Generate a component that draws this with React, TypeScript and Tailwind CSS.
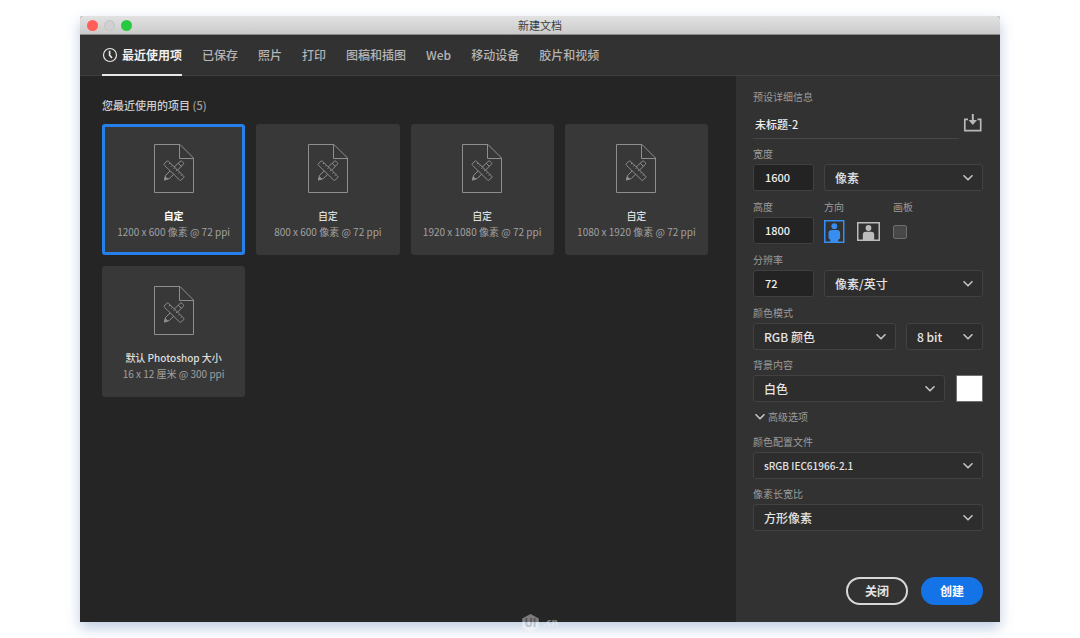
import { useState } from 'react';
import type { ReactNode } from 'react';
import clsx from 'clsx';

const TABS = ['最近使用项', '已保存', '照片', '打印', '图稿和插图', 'Web', '移动设备', '胶片和视频'];

const PRESETS = [
  { id: 1, name: '自定', detail: '1200 x 600 像素 @ 72 ppi' },
  { id: 2, name: '自定', detail: '800 x 600 像素 @ 72 ppi' },
  { id: 3, name: '自定', detail: '1920 x 1080 像素 @ 72 ppi' },
  { id: 4, name: '自定', detail: '1080 x 1920 像素 @ 72 ppi' },
  { id: 5, name: '默认 Photoshop 大小', detail: '16 x 12 厘米 @ 300 ppi' },
];

const ClockIcon = () => (
  <svg width="16" height="16" viewBox="0 0 16 16" fill="none" stroke="#e6e6e6" strokeWidth="1.2">
    <circle cx="8" cy="8" r="6.5" />
    <path d="M7.6 3.8v4.4l2.4 2.8" strokeWidth="1.7" />
  </svg>
);

const DocumentIcon = () => (
  <svg width="40" height="49" viewBox="0 0 40 49" fill="none" stroke="#8e8e8e" strokeWidth="1">
    <path d="M.5.5H26L39.5 14v34.5H.5z" />
    <path d="M25.5.5v14h14" />
    {/* pencil */}
    <path d="M10.4 36l1.3-4.8L26.2 17.4q1-.9 2 0l1 1q1 1 0 2L15.3 34.6z" />
    <path d="M24.3 19.3l3.2 3.2" />
    <path d="M10.4 36l1-3.2 2.2 2.2z" fill="#8e8e8e" />
    {/* ruler */}
    <path d="M10.4 19.6l2.6-2.4q.8-.6 1.6.2L29.6 32q.8.8 0 1.6l-2.4 2.4q-.8.8-1.6 0L10.4 21.2q-.8-.8 0-1.6z" fill="#383838" />
    <path d="M16 19l-1.2 1.2M18.4 21.3l-1.2 1.2M20.8 23.6l-1.2 1.2M23.2 25.9L22 27.1M25.6 28.3l-1.2 1.2M28 30.6l-1.2 1.2" />
  </svg>
);

const Chevron = ({ className }: { className?: string }) => (
  <svg width="10" height="6" viewBox="0 0 10 6" fill="none" stroke="#c4c4c4" strokeWidth="1.6" className={className}>
    <path d="M1 .8l4 4 4-4" strokeLinecap="round" strokeLinejoin="round" />
  </svg>
);

const SaveIcon = () => (
  <svg width="20" height="18" viewBox="0 0 20 18" fill="none" stroke="#b8b8b8" strokeWidth="1.7">
    <path d="M5 5.3H1.8v11.4h15.9V5.3h-3.2" />
    <path d="M9.8 0v8" strokeWidth="2" />
    <path d="M5.6 6H14l-4.2 5z" fill="#b8b8b8" stroke="none" />
  </svg>
);

const PortraitIcon = () => (
  <svg width="21" height="23" viewBox="0 0 21 23">
    <rect x=".75" y=".75" width="19" height="21.5" fill="none" stroke="#378ef0" strokeWidth="1.5" />
    <circle cx="10.3" cy="6.2" r="2.9" fill="#378ef0" />
    <path d="M7.8 10h5q3.3 0 3.3 3.2v4.2q0 1.8-1.8 2V22h-8v-2.6q-1.8-.2-1.8-2v-4.2Q4.5 10 7.8 10z" fill="#378ef0" />
  </svg>
);

const LandscapeIcon = () => (
  <svg width="23" height="19" viewBox="0 0 23 19">
    <rect x=".75" y=".75" width="21.5" height="17.5" fill="none" stroke="#bcbcbc" strokeWidth="1.5" />
    <circle cx="11.5" cy="6" r="2.9" fill="#bcbcbc" />
    <path d="M8.8 9.8h5.4q3 0 3 3V18H5.8v-5.2q0-3 3-3z" fill="#bcbcbc" />
  </svg>
);

const Label = ({ htmlFor, children }: { htmlFor: string; children: ReactNode }) => (
  <label htmlFor={htmlFor} className="text-[10px] leading-[14px] text-[#9c9c9c]">
    {children}
  </label>
);

const NumberBox = ({ id, value }: { id: string; value: string }) => (
  <input
    id={id}
    defaultValue={value}
    className="w-[61px] h-[27px] rounded-[3px] border border-[#404040] bg-[#232323] px-[11px] pb-[2px] text-[11px] font-medium text-[#eeeeee]"
  />
);

interface DropdownProps {
  id: string;
  options: string[];
  label?: string;
  className?: string;
  compact?: boolean;
}

const Dropdown = ({ id, options, label, className, compact }: DropdownProps) => (
  <div className={clsx('relative', className)}>
    <select
      id={id}
      aria-label={label}
      className={clsx(
        'block w-full h-[27px] appearance-none rounded-[3px] border border-[#424242] bg-[#2d2d2d] pl-[10px] pr-6 font-medium text-[#e4e4e4]',
        compact ? 'text-[10px]' : 'text-xs'
      )}
    >
      {options.map((o) => (
        <option key={o}>{o}</option>
      ))}
    </select>
    <Chevron className="pointer-events-none absolute right-[10px] top-[11px]" />
  </div>
);

const PresetDetails = () => {
  const [portrait, setPortrait] = useState(true);

  return (
    <aside className="flex w-[264px] shrink-0 flex-col bg-[#323232] px-[17px] pt-[14px] pb-[17px]">
      <div className="mb-2 flex flex-col">
        <Label htmlFor="doc-name">预设详细信息</Label>
        <div className="mt-[7px] flex items-start justify-between">
          <input
            id="doc-name"
            defaultValue="未标题-2"
            className="h-[28px] w-[206px] border-b border-[#474747] bg-transparent px-[2px] pb-[2px] text-[11px] font-medium text-[#eeeeee]"
          />
          <button aria-label="存储预设" className="pt-[3px]">
            <SaveIcon />
          </button>
        </div>
      </div>

      <div className="flex flex-col gap-[9px]">
        <div className="flex flex-col gap-[3px]">
          <Label htmlFor="width">宽度</Label>
          <div className="flex gap-[10px]">
            <NumberBox id="width" value="1600" />
            <Dropdown id="unit" label="单位" options={['像素', '英寸', '厘米', '毫米']} className="flex-1" />
          </div>
        </div>

        <div className="flex gap-[10px]">
          <div className="flex flex-col gap-[3px]">
            <Label htmlFor="height">高度</Label>
            <NumberBox id="height" value="1800" />
          </div>
          <div className="flex w-[59px] flex-col gap-[3px]">
            <span className="text-[10px] leading-[14px] text-[#9c9c9c]">方向</span>
            <div className="flex h-[29px] items-center gap-3">
              <button aria-label="纵向" aria-pressed={portrait} onClick={() => setPortrait(true)}>
                <PortraitIcon />
              </button>
              <button aria-label="横向" aria-pressed={!portrait} onClick={() => setPortrait(false)}>
                <LandscapeIcon />
              </button>
            </div>
          </div>
          <div className="flex flex-col gap-[3px]">
            <Label htmlFor="artboard">画板</Label>
            <div className="flex h-[29px] items-center">
              <input
                id="artboard"
                type="checkbox"
                className="size-[14px] appearance-none rounded-[2px] border border-[#6e6e6e] bg-[#484848] checked:bg-[#378ef0]"
              />
            </div>
          </div>
        </div>

        <div className="-mt-[2px] flex flex-col gap-[3px]">
          <Label htmlFor="resolution">分辨率</Label>
          <div className="flex gap-[10px]">
            <NumberBox id="resolution" value="72" />
            <Dropdown id="resolution-unit" label="分辨率单位" options={['像素/英寸', '像素/厘米']} className="flex-1" />
          </div>
        </div>

        <div className="flex flex-col gap-[3px]">
          <Label htmlFor="mode">颜色模式</Label>
          <div className="flex gap-[10px]">
            <Dropdown id="mode" options={['RGB 颜色', 'CMYK 颜色', '灰度']} className="flex-1" />
            <Dropdown id="depth" label="位深度" options={['8 bit', '16 bit', '32 bit']} className="w-[77px]" />
          </div>
        </div>
      </div>

      <div className="mt-2 flex flex-col gap-[3px]">
        <Label htmlFor="background">背景内容</Label>
        <div className="flex gap-[11px]">
          <Dropdown id="background" options={['白色', '黑色', '透明']} className="flex-1" />
          <button aria-label="背景颜色" className="size-[27px] rounded-[1px] border border-[#707070] bg-white" />
        </div>
      </div>

      <button className="mt-2 flex items-center gap-[3px] self-start pl-[2px] text-[10px] leading-[14px] text-[#9c9c9c]">
        <Chevron />
        高级选项
      </button>

      <div className="mt-[11px] flex flex-col gap-2">
        <div className="flex flex-col gap-[3px]">
          <Label htmlFor="profile">颜色配置文件</Label>
          <Dropdown id="profile" compact options={['sRGB IEC61966-2.1', 'Adobe RGB (1998)']} />
        </div>
        <div className="flex flex-col gap-[3px]">
          <Label htmlFor="ratio">像素长宽比</Label>
          <Dropdown id="ratio" options={['方形像素', 'D1/DV NTSC']} />
        </div>
      </div>

      <div className="mt-auto flex justify-end gap-[13px] pt-6 text-xs font-bold">
        <button className="h-7 w-[62px] rounded-full border-2 border-[#d8d8d8] text-[#e4e4e4]">关闭</button>
        <button className="h-7 w-[62px] rounded-full bg-[#1473e6] text-white">创建</button>
      </div>
    </aside>
  );
};

export default function App() {
  const [tab, setTab] = useState(TABS[0]);
  const [selected, setSelected] = useState(1);

  return (
    <div className="flex min-h-screen flex-col bg-white px-20 py-4 font-['Noto_Sans_CJK_SC',sans-serif]">
      <div className="relative flex flex-1 flex-col rounded-t-[3px] bg-[#252525] shadow-[0_6px_14px_rgba(110,145,190,0.45)]">
        {/* Title bar */}
        <div className="grid h-[19px] grid-cols-3 items-center rounded-t-[3px] border-b border-[#8a8a8a] bg-linear-to-b from-[#e2e2e2] to-[#cbcbcb] px-[7px]">
          <div className="flex gap-[6px]">
            <button aria-label="关闭窗口" className="size-[11px] rounded-full bg-[#ff5f57]" />
            <button aria-label="最小化" className="size-[11px] rounded-full border border-[#c4c4c4] bg-[#d0d0d0]" />
            <button aria-label="缩放" className="size-[11px] rounded-full bg-[#28c840]" />
          </div>
          <h1 className="text-center text-[11px] leading-[18px] text-[#3c3c3c]">新建文档</h1>
        </div>

        {/* Tabs */}
        <nav className="flex h-[41px] gap-5 border-b border-[#3e3e3e] bg-[#323232] px-[22px] text-xs">
          {TABS.map((t, i) => (
            <button
              key={t}
              onClick={() => setTab(t)}
              className={clsx(
                '-mb-px flex items-center gap-1 border-b-2',
                t === tab ? 'border-[#e8e8e8] font-bold text-[#f0f0f0]' : 'border-transparent font-medium text-[#b4b4b4]'
              )}
            >
              {i === 0 && <ClockIcon />}
              {t}
            </button>
          ))}
        </nav>

        <div className="flex flex-1">
          <main className="flex-1 pt-[21px] pr-7 pb-6 pl-[22px]">
            <h2 className="mb-[11px] text-[11px] leading-4 font-medium text-[#cccccc]">
              您最近使用的项目 <span className="text-[#a0a0a0]">(5)</span>
            </h2>
            <div className="grid grid-cols-4 gap-[11px]">
              {PRESETS.map((p) => (
                <button
                  key={p.id}
                  onClick={() => setSelected(p.id)}
                  className={clsx(
                    'flex h-[131px] flex-col items-center rounded-[3px] border-[3px] bg-[#383838] pt-[17px] text-[10px] leading-4 whitespace-nowrap',
                    p.id === selected ? 'border-[#2680eb]' : 'border-[#383838]'
                  )}
                >
                  <DocumentIcon />
                  <span className={clsx('mt-[15px]', p.id === selected ? 'font-bold text-white' : 'font-medium text-[#dcdcdc]')}>
                    {p.name}
                  </span>
                  <span className="text-[#a0a0a0]">{p.detail}</span>
                </button>
              ))}
            </div>
          </main>
          <PresetDetails />
        </div>

        {/* Watermark */}
        <svg
          width="38"
          height="20"
          viewBox="0 0 38 20"
          className="pointer-events-none absolute -bottom-[11px] left-[441px] opacity-40"
        >
          <path d="M9.5 1l8.300 4.500v9L9.500 19 1.200 14.500v-9z" fill="#ffffff" />
          <text x="9.500" y="14" textAnchor="middle" fontSize="11" fontWeight="700" fill="#8d96a3">
            UI
          </text>
          <text x="22" y="13" fontSize="10" fontWeight="700" fill="#ffffff">
            .cn
          </text>
        </svg>
      </div>
    </div>
  );
}
